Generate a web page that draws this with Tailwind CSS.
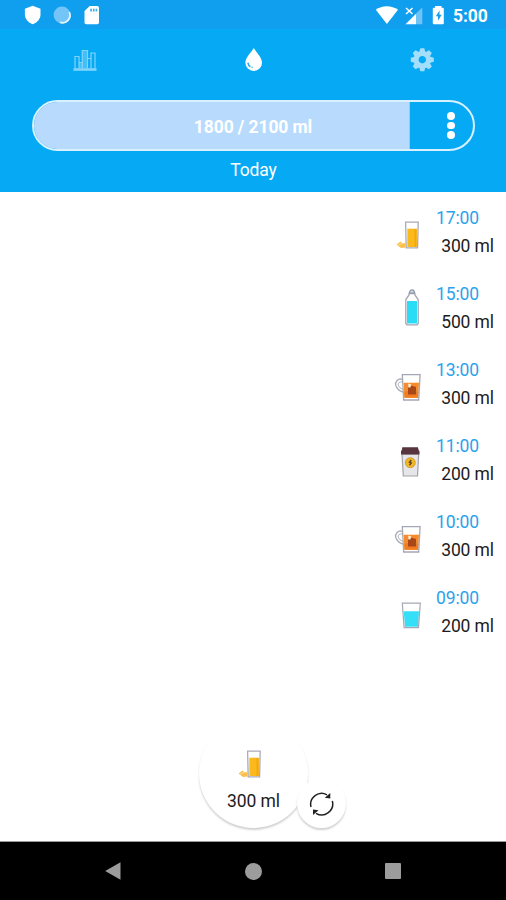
<!doctype html>
<html lang="en">

<head>
    <meta charset="UTF-8">
    <title>Water tracker</title>
    <meta name="viewport" content="width=device-width, initial-scale=1.0">
    <script src="https://cdn.jsdelivr.net/npm/@tailwindcss/browser@4"></script>
</head>

<body class="bg-white">

<!-- drink icons -->
<svg class="hidden">
    <symbol id="juice" viewBox="0 0 30 44">
        <path d="M13.3 19.7h9.4V38h-9.4z" fill="#fbb91b"/>
        <path d="M20.5 20h2.2v18h-2.2z" fill="#f5a60c"/>
        <path d="M11.6 13.2h12.6l-.6 25.6H12.2z" fill="none" stroke="#a9abb5" stroke-width="1.3"/>
        <path d="M2.5 35.5l4-3 2 2 3-.5v4.500l-4.500.5z" fill="#fcc04a"/>
        <path d="M4 36l4-1.500" stroke="#fde3ae" stroke-width=".8"/>
    </symbol>
    <symbol id="bottle" viewBox="0 0 30 44">
        <path d="M13 16h10v22.500h-10z" fill="#2bdcf7"/>
        <path d="M15 8.500v1.500l-3.200 4.500v24l1.200 1.300h10l1.200-1.300v-24l-3.300-4.500V8.500z" fill="none" stroke="#a3a6b4" stroke-width="1.300"/>
        <path d="M15.500 8c0-4.300 5-4.300 5 0z" fill="#c9dce8" stroke="#9297a8" stroke-width="1.200"/>
    </symbol>
    <symbol id="tea" viewBox="0 0 30 44">
        <path d="M8.500 18.500C4 16.500 .8 21 1.800 24.500c1 3 3.500 5.500 7.200 6.500" fill="none" stroke="#a9adb6" stroke-width="1.300"/>
        <path d="M8.700 21c-3-.6-5 1-4.300 3.200.5 2 2 3.300 4.500 4" fill="none" stroke="#a9adb6" stroke-width="1"/>
        <path d="M9.700 21.700h15.300l-.8 15H10.500z" fill="#f68a2c"/>
        <path d="M10.200 30.500h14.300l-.4 6.200H10.500z" fill="#f27c20"/>
        <path d="M14 26l3-1.500 5 1.500v7.500h-8z" fill="#a84718"/>
        <path d="M14.300 22.500l3 1-1 3h-2z" fill="#fff0d8"/>
        <path d="M8.300 13.700h17.800L24.700 39H9.700z" fill="none" stroke="#a5a7b2" stroke-width="1.300"/>
    </symbol>
    <symbol id="coffee" viewBox="0 0 30 44">
        <path d="M8 17h16.700l-1.200 22H9.300z" fill="#e6e6e9" stroke="#a4a3aa" stroke-width="1.200"/>
        <path d="M8.300 10.300h15.600l.8 3 .8.700v3.500H7V14l.8-.7z" fill="#56353f"/>
        <circle cx="16.300" cy="25.700" r="5" fill="#efb925" stroke="#c08b20" stroke-width=".7"/>
        <path d="M17.200 23l-1.700 2.200 1.700.8-1.700 2.200" fill="none" stroke="#664126" stroke-width="1.500"/>
    </symbol>
    <symbol id="water" viewBox="0 0 30 44">
        <path d="M9.700 22.300h15.300l-.8 15.500H11z" fill="#35dff7"/>
        <path d="M8.300 14.200h18L24.500 38.600H10.100z" fill="none" stroke="#a5a9b2" stroke-width="1.200"/>
    </symbol>
</svg>

<div class="flex flex-col w-[506px] h-[900px] overflow-hidden font-['Roboto',sans-serif]">

    <!-- status bar -->
    <div class="flex items-center h-[29px] shrink-0 bg-[#109fee] text-white">
        <svg class="w-[130px] h-[29px]" viewBox="0 0 130 29">
            <path d="M32.700 5.700l7.800 3v5.800c0 4.500-3.300 8-7.800 9.800-4.500-1.800-7.800-5.300-7.800-9.800V8.700z" fill="#fff"/>
            <circle cx="62" cy="15" r="8.400" fill="#74c4f8"/>
            <path d="M69.300 12a7.600 7.600 0 0 1-9.500 10.300" fill="none" stroke="#e8f6fe" stroke-width="1.700"/>
            <path d="M89.700 6h7.500q1.800 0 1.800 1.800v14.600q0 1.800-1.800 1.800H86.300q-1.800 0-1.800-1.800V11z" fill="#fff"/>
            <path d="M90.200 8.700h1.700v2.700h-1.700zM92.900 8.700h1.700v2.700h-1.700zM95.600 8.700h1.600v2.700h-1.600z" fill="#3eaef0"/>
        </svg>
        <svg class="w-[76px] h-[29px] ml-auto" viewBox="370 0 76 29">
            <path d="M375.800 9.800c6-4.800 16-4.800 22.200 0L386.900 24z" fill="#fff"/>
            <path d="M416 13.500V24.300h6.300V7.500z" fill="#6fc4f6"/>
            <path d="M405.500 24.300L416 13.800v10.500z" fill="#fff"/>
            <path d="M406 8l6.500 6M412.500 8l-6.500 6" stroke="#fff" stroke-width="1.500"/>
            <path d="M435 7.700V6h6.500v1.700h1.300q1 0 1 1v14.500q0 1-1 1h-9q-1 0-1-1V8.700q0-1 1-1z" fill="#fff"/>
            <path d="M439.500 10.500l-3.700 5.700h2.200v4.500l3.700-6h-2.200z" fill="#159fec"/>
        </svg>
        <span class="w-[60px] pl-[7px] pt-[4px] text-[17.500px] tracking-[-0.1px] leading-none font-bold">5:00</span>
    </div>

    <!-- header -->
    <div class="h-[163px] shrink-0 bg-[#05a9f4] text-white">
        <div class="grid grid-cols-3 h-[62px] items-center justify-items-center">
            <svg class="w-[26px] h-[26px]" viewBox="0 0 26 26" fill="none" stroke="#82d4fa" stroke-width="1.200">
                <path d="M11.500 4h5v17h-5zM8 15h3.500v6H8z" fill="#45bdf7" stroke="none"/>
                <path d="M4 21.500V9.500h4v12M8 15.500h3.300v6M11.300 21.500V3.500h5.200v18M16.500 11.500h3.500M20 21.500V6h4v15.500"/>
                <path d="M2.500 22.500h23" stroke-width="2.600"/>
            </svg>
            <svg class="w-[26px] h-[26px]" viewBox="0 0 26 26">
                <path d="M13.800 1c2.500 4.500 8.200 9.500 8.200 14.700a8.300 8.300 0 0 1-16.600 0c0-5.200 5.800-10.200 8.400-14.700z" fill="#fff"/>
                <path d="M7.900 15.700c.3 2.700 2 4.300 4.700 4.700" fill="none" stroke="#29acf0" stroke-width="1.500" stroke-dasharray="5 1.200"/>
            </svg>
            <svg class="w-[26px] h-[26px]" viewBox="-13.300 -12.700 26 26">
                <g id="teeth" fill="#a3dffb">
                    <path id="tooth" d="M-3.200-7l1.200-4.500h4l1.200 4.500z"/>
                    <use href="#tooth" transform="rotate(45)"/>
                    <use href="#tooth" transform="rotate(90)"/>
                    <use href="#tooth" transform="rotate(135)"/>
                    <use href="#tooth" transform="rotate(180)"/>
                    <use href="#tooth" transform="rotate(225)"/>
                    <use href="#tooth" transform="rotate(270)"/>
                    <use href="#tooth" transform="rotate(315)"/>
                </g>
                <circle r="6.200" fill="none" stroke="#a3dffb" stroke-width="5"/>
            </svg>
        </div>

        <!-- daily progress -->
        <div class="relative flex w-[443px] h-[51px] mx-auto mt-[9px] rounded-full border-2 border-[#d9f0fe] overflow-hidden">
            <div class="w-[376px] shrink-0 bg-[#b8dbfd] border-r border-[#8dcbfa]"></div>
            <div class="flex flex-col gap-[2px] items-center justify-center w-[83px] shrink-0">
                <div class="size-[7.500px] rounded-full bg-white"></div>
                <div class="size-[7.500px] rounded-full bg-white"></div>
                <div class="size-[7.500px] rounded-full bg-white"></div>
            </div>
            <div class="absolute inset-0 flex items-center justify-center pt-[3px] text-[17.500px] tracking-[-0.1px] font-bold">1800 / 2100 ml</div>
        </div>
        <div class="mt-[7px] pl-px text-center text-[17.500px] tracking-[-0.1px] leading-[24px]">Today</div>
    </div>

    <!-- drinks of the day -->
    <div class="relative flex flex-col h-[650px] shrink-0 pt-[11px] border-b border-[#9a9a9a] text-[17.500px] tracking-[-0.1px] leading-[28px]">
        <div class="flex h-[76px] justify-end gap-[12px] pr-[12px]">
            <svg class="w-[30px] h-[44px] mt-[6px]"><use href="#juice"/></svg>
            <div class="w-[58px] pt-px"><div class="text-[#2ba2ec]">17:00</div><div class="text-right text-[#1c1c1c]">300 ml</div></div>
        </div>
        <div class="flex h-[76px] justify-end gap-[12px] pr-[12px]">
            <svg class="w-[30px] h-[44px] mt-[6px]"><use href="#bottle"/></svg>
            <div class="w-[58px] pt-px"><div class="text-[#2ba2ec]">15:00</div><div class="text-right text-[#1c1c1c]">500 ml</div></div>
        </div>
        <div class="flex h-[76px] justify-end gap-[12px] pr-[12px]">
            <svg class="w-[30px] h-[44px] mt-[6px]"><use href="#tea"/></svg>
            <div class="w-[58px] pt-px"><div class="text-[#2ba2ec]">13:00</div><div class="text-right text-[#1c1c1c]">300 ml</div></div>
        </div>
        <div class="flex h-[76px] justify-end gap-[12px] pr-[12px]">
            <svg class="w-[30px] h-[44px] mt-[6px]"><use href="#coffee"/></svg>
            <div class="w-[58px] pt-px"><div class="text-[#2ba2ec]">11:00</div><div class="text-right text-[#1c1c1c]">200 ml</div></div>
        </div>
        <div class="flex h-[76px] justify-end gap-[12px] pr-[12px]">
            <svg class="w-[30px] h-[44px] mt-[6px]"><use href="#tea"/></svg>
            <div class="w-[58px] pt-px"><div class="text-[#2ba2ec]">10:00</div><div class="text-right text-[#1c1c1c]">300 ml</div></div>
        </div>
        <div class="flex h-[76px] justify-end gap-[12px] pr-[12px]">
            <svg class="w-[30px] h-[44px] mt-[6px]"><use href="#water"/></svg>
            <div class="w-[58px] pt-px"><div class="text-[#2ba2ec]">09:00</div><div class="text-right text-[#1c1c1c]">200 ml</div></div>
        </div>

        <!-- add button and cup switcher -->
        <div class="absolute left-[199px] bottom-[13px] flex flex-col items-center size-[109px] rounded-full bg-white shadow-[0_2px_2px_rgba(0,0,0,0.18)] text-[#1c1c1c]">
            <svg class="w-[30px] h-[44px] mt-[19px] mr-[5px]"><use href="#juice"/></svg>
            <div class="mt-[5px]">300 ml</div>
        </div>
        <div class="absolute left-[297px] bottom-[13px] flex items-center justify-center size-[49px] rounded-full bg-white shadow-[0_2px_2px_rgba(0,0,0,0.18)]">
            <svg class="w-[26px] h-[26px]" viewBox="0 -0.500 26 26" fill="none" stroke="#222" stroke-width="1.500">
                <path d="M2 15.500A11 11 0 0 1 18 3.300M23.300 9.500A11 11 0 0 1 7 21.800"/>
                <path d="M21.300 1.500v5.500l-5.500-.7zM4 23.500v-5.500l5.500.7z" fill="#222" stroke="none"/>
            </svg>
        </div>
    </div>

    <!-- navigation bar -->
    <div class="grid grid-cols-[repeat(3,140px)] flex-1 justify-center items-center justify-items-center bg-black">
        <svg class="w-[18px] h-[18px]" viewBox="0 0 18 18"><path d="M1.200 9L16.500.3v17.400z" fill="#9c9c9c"/></svg>
        <div class="size-[17px] rounded-full bg-[#9c9c9c]"></div>
        <div class="size-[16px] rounded-[1px] bg-[#9c9c9c]"></div>
    </div>

</div>

</body>

</html>
